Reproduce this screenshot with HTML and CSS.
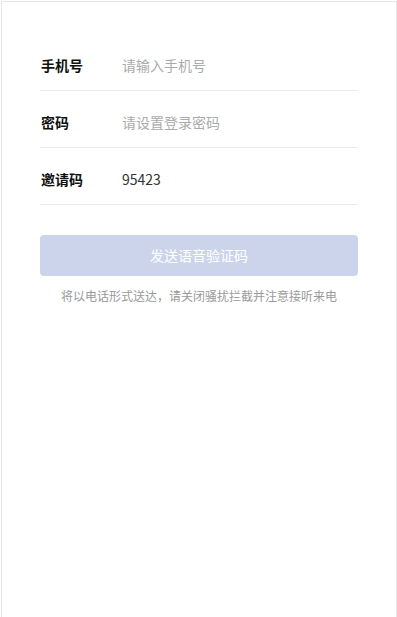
FILE: index.html
```html
<!DOCTYPE html>
<html lang="zh-CN">
<head>
<meta charset="utf-8">
<title>发送语音验证码</title>
<link rel="stylesheet" href="styles.css">
</head>
<body>
<div class="page">
  <form class="form">
    <div class="row">
      <label class="label">手机号</label>
      <input class="input" type="text" placeholder="请输入手机号" autofocus>
    </div>
    <div class="row">
      <label class="label">密码</label>
      <input class="input" type="password" placeholder="请设置登录密码">
    </div>
    <div class="row">
      <label class="label">邀请码</label>
      <input class="input" type="text" value="95423">
    </div>
    <button class="btn" type="button">发送语音验证码</button>
    <p class="note">将以电话形式送达，请关闭骚扰拦截并注意接听来电</p>
  </form>
</div>
</body>
</html>
```
FILE: styles.css
```css
html, body {
  margin: 0;
  padding: 0;
  background: #fff;
}
body {
  font-family: "Microsoft YaHei", "Noto Sans CJK SC", "Noto Sans", sans-serif;
  padding: 1px 0 0 1px;
  height: 617px;
  box-sizing: border-box;
  overflow: hidden;
}
.page {
  width: 396px;
  height: 640px;
  box-sizing: border-box;
  border: 1px solid #e6e6e6;
  border-bottom: none;
  padding: 32px 38px 0 38px;
}
.form {
  margin: 0;
  width: 318px;
}
.row {
  display: flex;
  align-items: center;
  box-sizing: content-box;
  padding-top: 6px;
  height: 50px;
  border-bottom: 1px solid #ebebeb;
}
.label {
  width: 82px;
  font-size: 14px;
  font-weight: bold;
  color: #111;
  line-height: 20px;
  padding-left: 1px;
}
.input {
  flex: 1;
  border: none;
  outline: none;
  padding: 0;
  margin: 0 0 0 -1px;
  font-family: inherit;
  font-size: 14px;
  line-height: 20px;
  color: #333;
  background: transparent;
  caret-color: #000;
}
.input::placeholder {
  color: #aaa;
}
.btn {
  display: block;
  width: 318px;
  height: 41px;
  margin-top: 30px;
  border: none;
  border-radius: 4px;
  background: #ccd4eb;
  color: #fff;
  font-family: inherit;
  font-size: 14px;
  padding: 0 0 2px 0;
}
.note {
  margin: 12px 0 0 0;
  text-align: center;
  font-size: 12px;
  line-height: 16px;
  color: #999;
}
```
